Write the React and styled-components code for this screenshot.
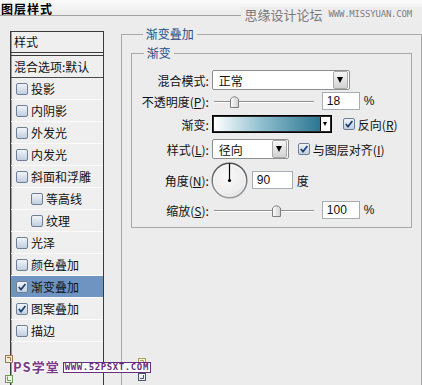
import React from "react";
import styled, { createGlobalStyle } from "styled-components";

const GlobalStyle = createGlobalStyle`
  html, body {
    margin: 0;
    padding: 0;
    background: #ececec;
    overflow: hidden;
  }
  body {
    font-family: "Noto Sans CJK SC", "Liberation Sans", sans-serif;
    font-size: 12px;
    color: #111;
  }
`;

const Page = styled.div`
  position: relative;
  width: 422px;
  height: 385px;
  overflow: hidden;
  background: #ececec;
`;

const TitleBar = styled.div`
  height: 15px;
  border-bottom: 1px solid #a3a3a3;
  background: linear-gradient(#fbfbfb, #ebebeb);
`;

const Title = styled.div`
  font-weight: bold;
  font-size: 12px;
  line-height: 17px;
  letter-spacing: 1px;
  padding-left: 1px;
  color: #000;
`;

const TopMark = styled.div`
  position: absolute;
  top: 7px;
  right: 0;
  padding: 0 10px 0 3px;
  display: flex;
  align-items: center;
  gap: 6px;
  background: #ededed;
  color: #7a7a7a;
  font-size: 13px;
  line-height: 15px;
`;

const TopMarkSmall = styled.span`
  font-family: "DejaVu Sans Mono", monospace;
  font-size: 9px;
  letter-spacing: -0.2px;
  color: #7d7d7d;
`;

const Body = styled.div`
  display: flex;
  align-items: flex-start;
  padding-left: 10px;
  gap: 17px;
`;

const StyleList = styled.div`
  width: 100px;
  height: 400px;
  margin-top: 15px;
  box-sizing: border-box;
  border: 1px solid #3a3a3a;
  box-shadow: inset 1px 0 0 #9a9a9a;
  background: #efefef;
`;

const ListHead = styled.div`
  height: 20px;
  line-height: 20px;
  padding-left: 3px;
  border-bottom: 4px double #3a3a3a;
`;

const ListRow = styled.div`
  height: 21px;
  display: flex;
  align-items: center;
  gap: 3px;
  padding-left: ${(p) => p.$indent}px;
  border-bottom: 1px solid ${(p) => (p.$strong ? "#4a4a4a" : "#fbfbfb")};
  background: ${(p) => (p.$selected ? "#7094c2" : "transparent")};
`;

const Group = styled.fieldset`
  margin: 11px 0 0;
  padding: 5px 9px 0;
  width: 320px;
  min-width: 0;
  min-height: 380px;
  border: 1px solid #a8a8a8;
  box-sizing: border-box;
`;

const InnerGroup = styled.fieldset`
  margin: 0;
  padding: 10px 0 8px;
  min-width: 0;
  border: 1px solid #a8a8a8;
`;

const Legend = styled.legend`
  margin-left: 12px;
  padding: 0 3px;
  font-size: 12px;
  line-height: 14px;
  color: #1f4f8a;
`;

const Row = styled.div`
  display: flex;
  align-items: center;
  height: ${(p) => p.$h}px;
  margin-top: ${(p) => p.$gap}px;
`;

const Label = styled.div`
  flex: none;
  width: 77px;
  margin-right: 3px;
  text-align: right;
  white-space: nowrap;
  u {
    text-underline-offset: 1px;
  }
`;

const SelectBox = styled.div`
  width: ${(p) => p.$w}px;
  height: 20px;
  box-sizing: border-box;
  border: 1px solid #8c8d8e;
  border-radius: 2px;
  background: #fff;
  display: flex;
  align-items: center;
  justify-content: space-between;
  padding-left: 6px;
`;

const DropButton = styled.div`
  width: 13px;
  height: 16px;
  margin-right: 1px;
  border: 1px solid #a9a9a9;
  border-radius: 2px;
  background: linear-gradient(#f6f6f6, #d2d2d2);
  display: flex;
  align-items: center;
  justify-content: center;
  &::after {
    content: "";
    border-left: 3.5px solid transparent;
    border-right: 3.5px solid transparent;
    border-top: 6px solid #000;
  }
`;

const SliderBox = styled.div`
  position: relative;
  width: 100px;
  height: 16px;
  margin: 0 8px 0 2px;
  &::before {
    content: "";
    position: absolute;
    left: 0;
    right: 0;
    top: 8px;
    height: 1px;
    background: #8f8f8f;
    box-shadow: 0 1px 0 #fff;
  }
`;

const Thumb = styled.svg`
  position: absolute;
  top: 2px;
`;

const NumberField = styled.div`
  width: ${(p) => p.$w}px;
  height: 18px;
  margin-left: ${(p) => p.$ml || 0}px;
  box-sizing: border-box;
  border: 1px solid #a7adb3;
  background: #fff;
  padding-left: 4px;
  font-family: "Liberation Sans", sans-serif;
  font-size: 12px;
  line-height: 16px;
`;

const Unit = styled.span`
  margin-left: 4px;
  font-family: ${(p) => (p.$latin ? '"Liberation Sans", sans-serif' : "inherit")};
`;

const Swatch = styled.div`
  width: 120px;
  height: 18px;
  box-sizing: border-box;
  border: 1px solid #000;
  box-shadow: inset 0 0 0 1px #2a2a2a;
  display: flex;
  padding: 1px;
`;

const SwatchFill = styled.div`
  flex: 1;
  background: linear-gradient(to right, #ffffff, #8fbfcf 45%, #2b7691);
`;

const SwatchArrow = styled.div`
  width: 9px;
  border-left: 1px solid #000;
  background: #fff;
  display: flex;
  align-items: center;
  justify-content: center;
  &::after {
    content: "";
    border-left: 2.5px solid transparent;
    border-right: 2.5px solid transparent;
    border-top: 4px solid #000;
  }
`;

const CheckLabel = styled.div`
  display: flex;
  align-items: center;
  gap: 3px;
  margin-left: ${(p) => p.$ml}px;
  white-space: nowrap;
  u {
    text-underline-offset: 1px;
  }
`;

const Dial = styled.svg`
  margin-left: -1px;
  flex: none;
`;

const BottomMark = styled.div`
  position: absolute;
  left: 13px;
  top: 360px;
  display: flex;
  align-items: center;
  gap: 3px;
`;

const MarkTitle = styled.span`
  font-weight: bold;
  font-size: 13px;
  line-height: 14px;
  letter-spacing: 1px;
  color: #7a3a8c;
  text-shadow: 1px 0 #fff, -1px 0 #fff, 0 1px #fff, 0 -1px #fff;
`;

const MarkUrl = styled.span`
  border: 1px solid #6a2d7e;
  background: #fff;
  color: #6a2d7e;
  font-family: "DejaVu Sans Mono", monospace;
  font-weight: bold;
  font-size: 9px;
  line-height: 9px;
  letter-spacing: 0.6px;
  padding: 0 1px;
`;

const Corner = styled.svg`
  position: absolute;
  left: ${(p) => p.$x}px;
  top: ${(p) => p.$y}px;
`;

function Check({ checked }) {
  return (
    <svg width="12" height="12" viewBox="0 0 12 12" style={{ flex: "none" }}>
      <defs>
        <linearGradient id="cbg" x1="0" y1="0" x2="0" y2="1">
          <stop offset="0" stopColor="#f3f6fa" />
          <stop offset="1" stopColor="#bfcddc" />
        </linearGradient>
      </defs>
      <rect x="0.5" y="0.5" width="11" height="11" rx="1.5" fill="url(#cbg)" stroke="#6e7f95" />
      {checked && (
        <path d="M2.8 6 L5 8.6 L9.4 3" fill="none" stroke="#1c3f72" strokeWidth="1.7" />
      )}
    </svg>
  );
}

function Slider({ value, min, max }) {
  const left = ((value - min) / (max - min)) * 91;
  return (
    <SliderBox>
      <Thumb width="9" height="13" viewBox="0 0 9 13" style={{ left }}>
        <defs>
          <linearGradient id="thg" x1="0" y1="0" x2="1" y2="0">
            <stop offset="0" stopColor="#fdfdfd" />
            <stop offset="1" stopColor="#cfcfcf" />
          </linearGradient>
        </defs>
        <path d="M0.5 4 Q4.5 -0.5 8.5 4 V12.5 H0.5 Z" fill="url(#thg)" stroke="#7f7f7f" />
      </Thumb>
    </SliderBox>
  );
}

const effects = [
  { name: "投影" },
  { name: "内阴影" },
  { name: "外发光" },
  { name: "内发光" },
  { name: "斜面和浮雕" },
  { name: "等高线", sub: true },
  { name: "纹理", sub: true },
  { name: "光泽" },
  { name: "颜色叠加" },
  { name: "渐变叠加", on: true, selected: true },
  { name: "图案叠加", on: true },
  { name: "描边" },
];

export default function App() {
  return (
    <Page>
      <GlobalStyle />
      <TitleBar>
        <Title>图层样式</Title>
      </TitleBar>
      <TopMark>
        思缘设计论坛<TopMarkSmall>WWW.MISSYUAN.COM</TopMarkSmall>
      </TopMark>

      <Body>
        <StyleList>
          <ListHead>样式</ListHead>
          <ListRow $indent={3} $strong>混合选项:默认</ListRow>
          {effects.map((e) => (
            <ListRow key={e.name} $indent={e.sub ? 20 : 5} $selected={e.selected}>
              <Check checked={e.on} />
              <span>{e.name}</span>
            </ListRow>
          ))}
        </StyleList>

        <Group>
          <Legend>渐变叠加</Legend>
          <InnerGroup>
            <Legend>渐变</Legend>
            <Row $h={20} $gap={0}>
              <Label>混合模式:</Label>
              <SelectBox $w={138}>
                <span>正常</span>
                <DropButton />
              </SelectBox>
            </Row>
            <Row $h={18} $gap={2}>
              <Label>
                不透明度(<u>P</u>):
              </Label>
              <Slider value={18} min={0} max={100} />
              <NumberField $w={38}>18</NumberField>
              <Unit $latin>%</Unit>
            </Row>
            <Row $h={18} $gap={5}>
              <Label>渐变:</Label>
              <Swatch>
                <SwatchFill />
                <SwatchArrow />
              </Swatch>
              <CheckLabel $ml={11}>
                <Check checked />
                <span>
                  反向(<u>R</u>)
                </span>
              </CheckLabel>
            </Row>
            <Row $h={20} $gap={6}>
              <Label>
                样式(<u>L</u>):
              </Label>
              <SelectBox $w={77}>
                <span>径向</span>
                <DropButton />
              </SelectBox>
              <CheckLabel $ml={9}>
                <Check checked />
                <span>
                  与图层对齐(<u>I</u>)
                </span>
              </CheckLabel>
            </Row>
            <Row $h={36} $gap={3}>
              <Label>
                角度(<u>N</u>):
              </Label>
              <Dial width="37" height="37" viewBox="0 0 37 37">
                <defs>
                  <radialGradient id="dialFill" cx="0.45" cy="0.4" r="0.6">
                    <stop offset="0" stopColor="#fafafa" />
                    <stop offset="0.8" stopColor="#ededed" />
                    <stop offset="1" stopColor="#d6d6d6" />
                  </radialGradient>
                  <linearGradient id="dialRing" x1="0" y1="0" x2="0" y2="1">
                    <stop offset="0" stopColor="#4f4f4f" />
                    <stop offset="1" stopColor="#9a9a9a" />
                  </linearGradient>
                </defs>
                <circle cx="18.5" cy="18.5" r="17.3" fill="url(#dialFill)" stroke="url(#dialRing)" strokeWidth="1.4" />
                <circle cx="18.5" cy="18.5" r="15.8" fill="none" stroke="#ffffff" strokeWidth="0.8" opacity="0.8" />
                <line x1="18.5" y1="18.5" x2="18.5" y2="1.5" stroke="#000" strokeWidth="1.2" />
                <circle cx="18.5" cy="18.5" r="1.6" fill="#000" />
              </Dial>
              <NumberField $w={41} $ml={4}>90</NumberField>
              <Unit>度</Unit>
            </Row>
            <Row $h={18} $gap={3}>
              <Label>
                缩放(<u>S</u>):
              </Label>
              <Slider value={100} min={10} max={150} />
              <NumberField $w={38}>100</NumberField>
              <Unit $latin>%</Unit>
            </Row>
          </InnerGroup>
        </Group>
      </Body>

      <Corner $x={5} $y={355} width="8" height="8" viewBox="0 0 8 8">
        <rect x="0.5" y="0.5" width="7" height="7" fill="#f4ece0" stroke="#9a7a55" />
        <path d="M2 2.5 H5.5 V6" fill="none" stroke="#9a7a55" />
      </Corner>
      <Corner $x={5} $y={375} width="8" height="8" viewBox="0 0 8 8">
        <rect x="0.5" y="0.5" width="7" height="7" fill="#eef6e8" stroke="#6f9a5a" />
        <path d="M2.5 1.5 V5.5 H6" fill="none" stroke="#6f9a5a" />
      </Corner>
      <Corner $x={138} $y={358} width="8" height="8" viewBox="0 0 8 8">
        <rect x="0.5" y="0.5" width="7" height="7" fill="#f7f3d6" stroke="#a89e5a" />
        <path d="M2 2.5 H5.5 V6" fill="none" stroke="#a89e5a" />
      </Corner>
      <Corner $x={138} $y={373} width="8" height="8" viewBox="0 0 8 8">
        <rect x="0.5" y="0.5" width="7" height="7" fill="#eef0f4" stroke="#4a5470" />
        <path d="M5.5 2 V5.5 H2" fill="none" stroke="#4a5470" />
      </Corner>
      <BottomMark>
        <MarkTitle>PS学堂</MarkTitle>
        <MarkUrl>WWW.52PSXT.COM</MarkUrl>
      </BottomMark>
    </Page>
  );
}
